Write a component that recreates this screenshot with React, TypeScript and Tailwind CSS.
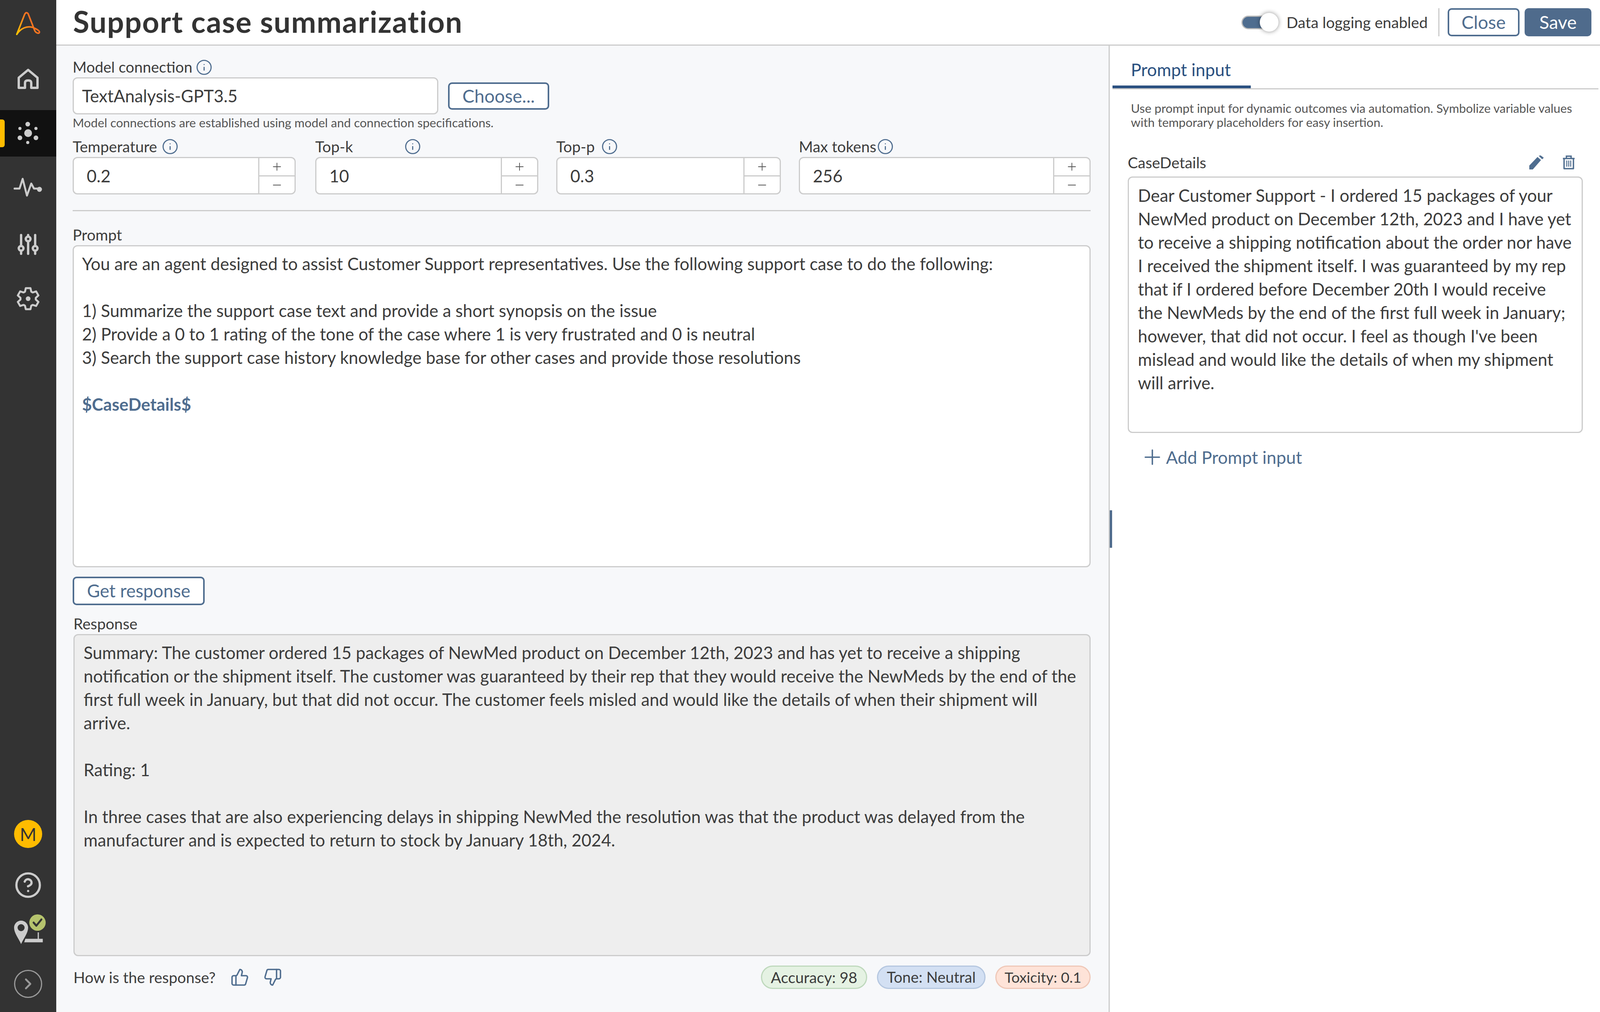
import { ChevronRight, CircleHelp, Info, Minus, Plus, ThumbsDown, ThumbsUp } from "lucide-react";

const promptLines = [
  "You are an agent designed to assist Customer Support representatives. Use the following support case to do the following:",
  "",
  "1) Summarize the support case text and provide a short synopsis on the issue",
  "2) Provide a 0 to 1 rating of the tone of the case where 1 is very frustrated and 0 is neutral",
  "3) Search the support case history knowledge base for other cases and provide those resolutions",
  "",
];

const responseLines = [
  "Summary: The customer ordered 15 packages of NewMed product on December 12th, 2023 and has yet to receive a shipping",
  "notification or the shipment itself. The customer was guaranteed by their rep that they would receive the NewMeds by the end of the",
  "first full week in January, but that did not occur. The customer feels misled and would like the details of when their shipment will",
  "arrive.",
  "",
  "Rating: 1",
  "",
  "In three cases that are also experiencing delays in shipping NewMed the resolution was that the product was delayed from the",
  "manufacturer and is expected to return to stock by January 18th, 2024.",
];

const caseLines = [
  "Dear Customer Support - I ordered 15 packages of your",
  "NewMed product on December 12th, 2023 and I have yet",
  "to receive a shipping notification about the order nor have",
  "I received the shipment itself. I was guaranteed by my rep",
  "that if I ordered before December 20th I would receive",
  "the NewMeds by the end of the first full week in January;",
  "however, that did not occur. I feel as though I've been",
  "mislead and would like the details of when my shipment",
  "will arrive.",
];

function Lines({ lines }: { lines: string[] }) {
  return (
    <>
      {lines.map((line, i) => (
        <div key={i} className="h-[60px] whitespace-nowrap text-[43.7px] leading-[60px] text-[#3c3c3c]">
          {line}
        </div>
      ))}
    </>
  );
}

function Logo() {
  return (
    <svg width="62" height="64" viewBox="0 0 62 64" fill="none">
      <defs>
        <linearGradient id="aa" x1="0" y1="1" x2="1" y2="0.4">
          <stop offset="0" stopColor="#ffc800" />
          <stop offset="0.55" stopColor="#f6821f" />
          <stop offset="1" stopColor="#f15a24" />
        </linearGradient>
      </defs>
      <path
        d="M2 60 L22 9 Q26 1 31 7 L47 48 C50 58 60 59 60 54 C60 50 50 45 42 42 C28 38 12 44 2 60 Z"
        stroke="url(#aa)"
        strokeWidth="4"
        strokeLinejoin="round"
      />
    </svg>
  );
}

function HomeIcon() {
  return (
    <svg width="54" height="54" viewBox="0 0 54 54" fill="none" stroke="#ccc" strokeWidth="6" strokeLinejoin="round">
      <path d="M3 24 L27 4 L51 24 V50 H35 V37 Q35 31 27 31 Q19 31 19 37 V50 H3 Z" />
    </svg>
  );
}

function SparkIcon() {
  return (
    <svg width="54" height="60" viewBox="0 0 54 60" fill="#ccc">
      <circle cx="27" cy="29" r="10" />
      <circle cx="26" cy="6" r="6" />
      <circle cx="6" cy="17" r="4" />
      <circle cx="47" cy="17" r="4" />
      <circle cx="6" cy="41" r="6" />
      <circle cx="47" cy="41" r="6" />
      <circle cx="26" cy="53" r="4" />
    </svg>
  );
}

function PulseIcon() {
  return (
    <svg width="74" height="52" viewBox="0 0 74 52" fill="none" stroke="#ccc" strokeWidth="5" strokeLinecap="round" strokeLinejoin="round">
      <path d="M2 29 H15 L23 4 L34 47 L45 16 L52 29 H66" />
      <circle cx="66" cy="31" r="4" fill="#ccc" />
    </svg>
  );
}

function SlidersIcon() {
  return (
    <svg width="54" height="54" viewBox="0 0 54 54" fill="#ccc">
      <rect x="6" y="0" width="6" height="54" rx="3" />
      <rect x="24" y="0" width="6" height="54" rx="3" />
      <rect x="42" y="0" width="6" height="54" rx="3" />
      <circle cx="9" cy="37" r="9" />
      <circle cx="27" cy="13" r="9" />
      <circle cx="45" cy="37" r="9" />
      <circle cx="9" cy="37" r="3" fill="#333" />
      <circle cx="27" cy="13" r="3" fill="#333" />
      <circle cx="45" cy="37" r="3" fill="#333" />
    </svg>
  );
}

// six blocky teeth, same outline rotated round the centre
function GearIcon() {
  const d =
    [0, 60, 120, 180, 240, 300]
      .map((deg, i) => {
        const a = (deg * Math.PI) / 180;
        const dx = Math.sin(a);
        const dy = -Math.cos(a);
        const px = Math.cos(a);
        const py = Math.sin(a);
        const pt = (r: number, w: number) => `${(30 + r * dx + w * px).toFixed(2)} ${(30 + r * dy + w * py).toFixed(2)}`;
        return `${i === 0 ? "M" : "L"}${pt(18, -8)} L${pt(27, -6)} L${pt(27, 6)} L${pt(18, 8)}`;
      })
      .join(" ") + " Z";
  return (
    <svg width="60" height="60" viewBox="0 0 60 60">
      <path d={d} fill="none" stroke="#ccc" strokeWidth="5" strokeLinejoin="round" />
      <circle cx="30" cy="30" r="6" fill="#ccc" />
    </svg>
  );
}

function PinIcon() {
  return (
    <svg width="82" height="76" viewBox="0 0 82 76" fill="none">
      <path d="M18 16 C8 16 0 24 0 34 C0 48 12 62 18 76 C24 62 36 48 36 34 C36 24 28 16 18 16 Z" fill="#ccc" />
      <circle cx="18" cy="34" r="9" fill="#333" />
      <path d="M62 46 V64 H30 L28 70 H72 V64 H62" fill="#ccc" stroke="#ccc" strokeWidth="3" />
      <circle cx="60" cy="21" r="21" fill="#b5c36d" />
      <path d="M50 21 L57 29 L70 13" stroke="#333" strokeWidth="5" strokeLinecap="round" strokeLinejoin="round" />
    </svg>
  );
}

function PencilIcon() {
  return (
    <svg width="37" height="36" viewBox="0 0 37 36" fill="#4f6d8f">
      <path d="M0 36 V26 L21 4 L30 12 L9 36 Z" />
      <path d="M24 1 L29 0 L37 6 L33 10 Z" />
    </svg>
  );
}

function TrashIcon() {
  return (
    <svg width="30" height="36" viewBox="0 0 30 36" fill="none" stroke="#4f6d8f" strokeWidth="3.5">
      <path d="M0 8 H30 M9 7 V2 H21 V7" />
      <path d="M3 8 V34 H27 V8" strokeLinejoin="round" />
      <path d="M10 13 V29 M15 13 V29 M20 13 V29" strokeWidth="2.5" />
    </svg>
  );
}

function InfoIcon() {
  return <Info size={43} strokeWidth={1.6} color="#4f6d8f" />;
}

function NumberField({
  label,
  labelClass,
  value,
  widthClass,
  marginClass,
}: {
  label: string;
  labelClass: string;
  value: string;
  widthClass: string;
  marginClass: string;
}) {
  return (
    <div className={`flex flex-col ${widthClass} ${marginClass}`}>
      <div className="mb-[3px] flex h-[47px] items-center">
        <span className={`whitespace-nowrap text-[39px] text-[#3c3c3c] ${labelClass}`}>{label}</span>
        <InfoIcon />
      </div>
      <div className="flex h-[96px] overflow-hidden rounded-[12px] border-[3px] border-[#ccc] bg-white">
        <div className="flex-1 pl-[33px] text-[43.7px] leading-[90px] text-[#3c3c3c]">{value}</div>
        <div className="flex w-[93px] flex-col border-l-[3px] border-[#ccc]">
          <div className="flex h-[47px] items-center justify-center border-b-[3px] border-[#ccc]">
            <Plus size={32} strokeWidth={1.4} color="#555" />
          </div>
          <div className="flex flex-1 items-center justify-center">
            <Minus size={32} strokeWidth={1.4} color="#555" />
          </div>
        </div>
      </div>
    </div>
  );
}

function Badge({ text, colorClass }: { text: string; colorClass: string }) {
  return (
    <div className={`flex h-[60px] items-center justify-center whitespace-nowrap rounded-full border-[3px] text-[#3c3c3c] ${colorClass}`}>
      {text}
    </div>
  );
}

export default function App() {
  return (
    <div className="flex h-[2592px] w-[4098px] overflow-hidden bg-white [font-family:Lato,sans-serif]">
      <aside className="flex h-full w-[144px] flex-col items-center bg-[#333]">
        <div className="mt-[28px] flex h-[64px] items-center justify-center">
          <Logo />
        </div>
        <div className="mt-[83px] flex h-[54px] items-center justify-center">
          <HomeIcon />
        </div>
        <div className="relative mt-[53px] flex h-[119px] w-full items-center justify-center bg-[#111]">
          <div className="absolute left-0 top-[24px] h-[71px] w-[12px] rounded-r-[6px] bg-[#ffbc00]" />
          <SparkIcon />
        </div>
        <div className="mt-[53px] flex h-[52px] items-center justify-center">
          <PulseIcon />
        </div>
        <div className="mt-[93px] flex h-[54px] items-center justify-center">
          <SlidersIcon />
        </div>
        <div className="mt-[82px] flex h-[60px] items-center justify-center">
          <GearIcon />
        </div>
        <div className="mt-auto flex h-[72px] w-[72px] items-center justify-center rounded-full bg-[#ffbc00] text-[46px] text-[#333]">
          M
        </div>
        <div className="mt-[64px] flex h-[62px] items-center justify-center">
          <CircleHelp size={72} strokeWidth={1.9} color="#ccc" />
        </div>
        <div className="mt-[44px] flex h-[76px] w-full justify-start pl-[36px]">
          <PinIcon />
        </div>
        <div className="mb-[36px] mt-[66px] flex h-[72px] w-[72px] items-center justify-center rounded-full border-[3px] border-[#999]">
          <ChevronRight size={46} strokeWidth={2.4} color="#999" />
        </div>
      </aside>

      <main className="flex h-full flex-1 flex-col">
        <header className="flex h-[117px] items-center border-b-[3px] border-[#ccc] bg-white pl-[43px] pr-[24px]">
          <h1 className="flex-1 pb-[4px] text-[76px] font-bold tracking-[1.7px] text-[#333]">Support case summarization</h1>
          <div className="h-[35px] w-[74px] overflow-hidden rounded-full border-[3px] border-[#bbb] bg-[#4f6d8f]" />
          <div className="-ml-[27px] mr-[20px] h-[48px] w-[48px] rounded-full bg-white shadow-[0_0_12px_rgba(0,0,0,0.45)]" />
          <span className="whitespace-nowrap text-[39.2px] text-[#3c3c3c]">Data logging enabled</span>
          <div className="ml-[27px] mr-[21px] h-[72px] w-[3px] bg-[#ccc]" />
          <button className="flex h-[72px] w-[184px] items-center justify-center rounded-[10px] border-[4px] border-[#4f6d8f] bg-white text-[46.5px] text-[#4f6d8f]">
            Close
          </button>
          <button className="ml-[13px] flex h-[72px] w-[171px] items-center justify-center rounded-[10px] bg-[#4f6b8c] text-[46.5px] text-white">
            Save
          </button>
        </header>

        <div className="flex min-h-0 flex-1">
          <section className="flex w-[2697px] flex-col border-r-[3px] border-[#ccc] bg-[#f7f8fa] pl-[42px] pr-[46px]">
            <div className="mb-[5px] mt-[34px] flex h-[42px] items-center">
              <span className="w-[315px] whitespace-nowrap text-[38.5px] text-[#3c3c3c]">Model connection</span>
              <InfoIcon />
            </div>
            <div className="flex items-center">
              <div className="h-[95px] w-[936px] rounded-[12px] border-[3px] border-[#ccc] bg-white pl-[21px] text-[43.7px] leading-[89px] text-[#3c3c3c]">
                TextAnalysis-GPT3.5
              </div>
              <button className="ml-[25px] flex h-[70px] w-[259px] items-center justify-center rounded-[10px] border-[4px] border-[#4f6d8f] bg-white text-[46px] text-[#4f6d8f]">
                Choose...
              </button>
            </div>
            <div className="h-[42px] whitespace-nowrap text-[31.5px] leading-[42px] text-[#555]">
              Model connections are established using model and connection specifications.
            </div>
            <div className="mt-[17px] flex">
              <NumberField label="Temperature" labelClass="w-[228px]" value="0.2" widthClass="w-[571px]" marginClass="" />
              <NumberField label="Top-k" labelClass="w-[228px]" value="10" widthClass="w-[571px]" marginClass="ml-[50px]" />
              <NumberField label="Top-p" labelClass="w-[115px]" value="0.3" widthClass="w-[575px]" marginClass="ml-[46px]" />
              <NumberField label="Max tokens" labelClass="w-[200px]" value="256" widthClass="w-[747px]" marginClass="ml-[46px]" />
            </div>
            <div className="mt-[40px] h-[3px] bg-[#ccc]" />
            <div className="mt-[37px] h-[50px] text-[39px] leading-[47px] text-[#3c3c3c]">Prompt</div>
            <div className="h-[825px] rounded-[12px] border-[3px] border-[#ccc] bg-white pl-[21px] pt-[14px]">
              <Lines lines={promptLines} />
              <div className="h-[60px] text-[43.7px] font-bold leading-[60px] text-[#4f6d8f]">$CaseDetails$</div>
            </div>
            <button className="mt-[24px] flex h-[73px] w-[338px] items-center justify-center rounded-[10px] border-[4px] border-[#4f6d8f] bg-white text-[45.5px] text-[#4f6d8f]">
              Get response
            </button>
            <div className="ml-[2px] mt-[23px] h-[51px] text-[39px] leading-[48px] text-[#3c3c3c]">Response</div>
            <div className="ml-[2px] h-[825px] rounded-[12px] border-[3px] border-[#ccc] bg-[#eee] pl-[23px] pt-[14px]">
              <Lines lines={responseLines} />
            </div>
            <div className="ml-[2px] mt-[24px] flex h-[60px] items-center">
              <span className="w-[402px] whitespace-nowrap text-[39px] text-[#3c3c3c]">How is the response?</span>
              <ThumbsUp size={48} strokeWidth={1.8} color="#4f6d8f" />
              <div className="ml-[36px]">
                <ThumbsDown size={48} strokeWidth={1.8} color="#4f6d8f" />
              </div>
              <div className="ml-auto flex gap-[25px]">
                <Badge text="Accuracy: 98" colorClass="w-[272px] border-[#bfd9bd] bg-[#e5f2e3] text-[39px]" />
                <Badge text="Tone: Neutral" colorClass="w-[278px] border-[#b5c7e0] bg-[#d3e0f3] text-[38.5px]" />
                <Badge text="Toxicity: 0.1" colorClass="w-[244px] border-[#efc8b8] bg-[#fee3d8] text-[37.5px]" />
              </div>
            </div>
          </section>

          <section className="relative flex-1 bg-white">
            <div className="absolute left-0 top-[1190px] h-[96px] w-[6px] bg-[#4f6b8c]" />
            <div className="ml-[7px] mr-[6px] flex h-[112px] items-end border-b-[3px] border-[#ccc]">
              <div className="h-[109px] w-[354px] border-b-[7px] border-[#2a5080] pl-[47px] pt-[31px] text-[44.4px] leading-[60px] text-[#2a5080]">
                Prompt input
              </div>
            </div>
            <div className="ml-[54px] mt-[30px] text-[31.4px] leading-[36px] text-[#555]">
              <div className="whitespace-nowrap">Use prompt input for dynamic outcomes via automation. Symbolize variable values</div>
              <div className="whitespace-nowrap">with temporary placeholders for easy insertion.</div>
            </div>
            <div className="ml-[46px] mr-[46px] mt-[60px]">
              <div className="flex h-[50px] items-center text-[39px] text-[#3c3c3c]">
                <span className="flex-1">CaseDetails</span>
                <PencilIcon />
                <div className="ml-[49px] mr-[21px]">
                  <TrashIcon />
                </div>
              </div>
              <div className="mt-[11px] h-[657px] rounded-[12px] border-[3px] border-[#ccc] bg-white pl-[23px] pt-[15px]">
                <Lines lines={caseLines} />
              </div>
              <div className="ml-[32px] mt-[32px] flex h-[60px] items-center text-[44.6px] text-[#4f6d8f]">
                <Plus size={62} strokeWidth={1.4} color="#4f6d8f" />
                <span className="ml-[4px]">Add Prompt input</span>
              </div>
            </div>
          </section>
        </div>
      </main>
    </div>
  );
}
